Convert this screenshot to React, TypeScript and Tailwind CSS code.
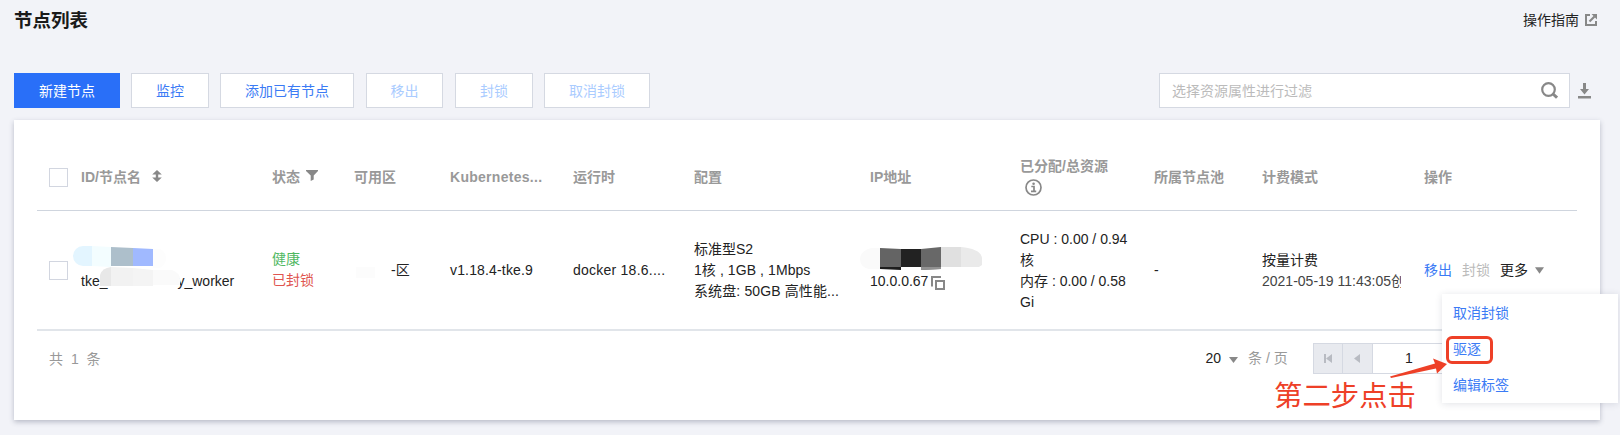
import type { ReactNode } from "react";

const columns =
  "grid grid-cols-[44px_191px_82px_96px_123px_121px_176px_150px_134px_108px_162px_153px] items-center";

function Button({ children, primary, disabled, width }: { children: ReactNode; primary?: boolean; disabled?: boolean; width: string }) {
  const tone = primary
    ? "border-[#296ff8] bg-[#296ff8] text-white"
    : disabled
      ? "border-[#d5d9e2] bg-white text-[#aaccff]"
      : "border-[#d5d9e2] bg-white text-[#3b7bf5]";
  return <button className={`h-[35px] border pt-px ${width} ${tone}`}>{children}</button>;
}

function Checkbox() {
  return <span className="ml-3 block h-[19px] w-[19px] border border-[#d2d6e0] bg-white" />;
}

function SortIcon() {
  return (
    <svg className="mb-[2px] ml-[11px] h-3 w-[10px]" viewBox="0 0 10 12" fill="#888">
      <path d="M5 0l4.800 4.500H6.200v3h3.600L5 12 .2 7.500h3.600v-3H.2z" />
    </svg>
  );
}

function FilterIcon() {
  return (
    <svg className="mb-[4px] ml-[6px] h-[11px] w-[12px]" viewBox="0 0 12 11" fill="#888">
      <path d="M0 0h12v1L7.700 5.500V9.500L4.700 11V5.500L0 1z" />
    </svg>
  );
}

function InfoIcon() {
  return (
    <svg className="ml-[5px] h-[17px] w-[17px]" viewBox="0 0 17 17" fill="none" stroke="#888">
      <circle cx="8.500" cy="8.500" r="7.500" strokeWidth="1.700" />
      <path d="M6.300 7.500h2.700v4.500M6 12.300h5.200" strokeWidth="1.700" />
      <circle cx="8.600" cy="4.700" r="1.300" fill="#888" stroke="none" />
    </svg>
  );
}

function CopyIcon() {
  return (
    <svg className="ml-[3px] mt-[3px] h-[14px] w-[14px]" viewBox="0 0 14 14" fill="none" stroke="#888" strokeWidth="2">
      <path d="M1 10.500V1h9" />
      <rect x="5" y="5" width="8" height="8" />
    </svg>
  );
}

function NameMask() {
  return (
    <svg className="absolute -left-2 -top-[2px] h-[41px] w-[108px]" viewBox="0 0 108 41">
      <path d="M10 0h9v20h-9a10 10 0 0 1 0-20" fill="#e3f5ff" />
      <path d="M19 0l19 1v20l-19-1z" fill="#f3fdff" />
      <path d="M38 1l22 1v18H38z" fill="#adbfcb" />
      <path d="M60 2l20 1v17H60z" fill="#a0b9ff" />
      <path d="M80 3h7q6 3 6 9t-6 10H80z" fill="#fdfdfd" />
      <path d="M38 21v19H27V29q2-7 11-8" fill="#e8e8e8" />
      <path d="M38 21l22 1v18H38z" fill="#f2f2f2" />
      <path d="M60 22l20 2v16H60z" fill="#f4f4f4" />
      <path d="M80 24h19q8 3 8 9v6H80z" fill="#fafafa" />
    </svg>
  );
}

function IpMask() {
  return (
    <svg className="absolute -left-[10px] -top-[2px] h-[24px] w-[123px]" viewBox="0 0 123 24">
      <path d="M11 1h10v21H9Q0 20 0 12T11 1" fill="#fafafa" />
      <path d="M20 1l21 1v18H20z" fill="#646464" />
      <path d="M20 20h21v3l-21-1z" fill="#1d1d1d" />
      <path d="M41 2h20v18H41z" fill="#222" />
      <path d="M61 2l20-2v22l-20 1z" fill="#686868" />
      <path d="M61 20h20v2l-20 1z" fill="#909090" />
      <path d="M81 0h20v20H81z" fill="#e0e0e0" />
      <path d="M101 0q20 2 21 11v7l-3 2h-18z" fill="#eaeaea" />
    </svg>
  );
}

export default function App() {
  return (
    <div className="relative h-[435px] w-[1620px] overflow-hidden bg-[#f2f3f8] px-[14px] font-['Liberation_Sans','Noto_Sans_CJK_SC',sans-serif] text-sm leading-[21px] text-[#222]">
      <header className="flex h-[40px] items-center justify-between pr-[9px]">
        <h1 className="text-[18.500px] font-bold text-[#1a1a1a]">节点列表</h1>
        <a className="flex items-center">
          操作指南
          <svg className="ml-[6px] h-3 w-3" viewBox="0 0 12 12" fill="none" stroke="#888" strokeWidth="2">
            <path d="M5 1H1v10h10V7" />
            <path d="M4.500 7.500l5-5" strokeWidth="2.200" />
            <path d="M6.500 0H12v5.500z" fill="#888" stroke="none" />
          </svg>
        </a>
      </header>

      <div className="flex h-20 items-start pt-[33px]">
        <div className="flex">
          <Button primary width="w-[106px]">新建节点</Button>
          <Button width="ml-[11px] w-[78px]">监控</Button>
          <Button width="ml-[11px] w-[134px]">添加已有节点</Button>
          <Button disabled width="ml-3 w-[77px]">移出</Button>
          <Button disabled width="ml-3 w-[78px]">封锁</Button>
          <Button disabled width="ml-[11px] w-[106px]">取消封锁</Button>
        </div>
        <div className="ml-auto flex h-[35px] w-[411px] items-center justify-between border border-[#d5d9e2] bg-white pl-3 pr-[11px] text-[#bbb]">
          <span className="pt-px">选择资源属性进行过滤</span>
          <svg className="h-[17px] w-[17px]" viewBox="0 0 17 17" fill="none" stroke="#888">
            <circle cx="7.500" cy="7.500" r="6.300" strokeWidth="2.200" />
            <path d="M11.500 11.500l4.500 4.200" strokeWidth="3" />
          </svg>
        </div>
        <svg className="ml-2 mr-[15px] mt-[10px] h-4 w-[13px]" viewBox="0 0 13 16" fill="#888">
          <path d="M5 0h3v6h3l-4.500 5.500L2 6h3zM0 13h13v2.500H0z" />
        </svg>
      </div>

      <main className="h-[300px] w-[1586px] bg-white pl-[23px] pt-6 shadow-[0_2px_5px_rgba(50,55,85,0.3)]">
        <div className={`${columns} h-[67px] w-[1540px] border-b border-[#cfd5de] font-bold text-[#999]`}>
          <Checkbox />
          <div className="flex items-center">ID/节点名<SortIcon /></div>
          <div className="flex items-center">状态<FilterIcon /></div>
          <div>可用区</div>
          <div className="tracking-[0.280px]">Kubernetes...</div>
          <div>运行时</div>
          <div>配置</div>
          <div>IP地址</div>
          <div>
            已分配/总资源
            <div className="flex h-[21px] items-center"><InfoIcon /></div>
          </div>
          <div>所属节点池</div>
          <div>计费模式</div>
          <div>操作</div>
        </div>

        <div className={`${columns} h-[120px] w-[1540px] border-b-2 border-[#e1e5ea]`}>
          <Checkbox />
          <div className="relative pt-[23px]">
            tke_<span className="ml-[70px]">y_worker</span>
            <NameMask />
          </div>
          <div>
            <div className="text-[#4fb862]">健康</div>
            <div className="text-[#e05550]">已封锁</div>
          </div>
          <div className="flex items-center pl-[2px]">
            <span className="mr-4 mt-[5px] h-[11px] w-[19px] bg-[#fcfcfc]" />-区
          </div>
          <div className="pt-px tracking-[0.160px]">v1.18.4-tke.9</div>
          <div className="pt-px tracking-[0.240px]">docker 18.6....</div>
          <div>
            <div>标准型S2</div>
            <div className="tracking-[0.080px]">1核 , 1GB , 1Mbps</div>
            <div className="whitespace-nowrap tracking-[0.120px]">系统盘: 50GB 高性能...</div>
          </div>
          <div className="relative pt-[22px]">
            <div className="flex h-[21px] items-center">10.0.0.67<CopyIcon /></div>
            <IpMask />
          </div>
          <div className="w-[110px] pt-px">
            <div>CPU : 0.00 / 0.94</div>
            <div>核</div>
            <div>内存 : 0.00 / 0.58</div>
            <div>Gi</div>
          </div>
          <div className="pt-px">-</div>
          <div className="w-[139px] overflow-hidden whitespace-nowrap pt-px">
            <div>按量计费</div>
            <div className="text-[#444]">2021-05-19 11:43:05创</div>
          </div>
          <div className="flex items-center gap-[10px]">
            <span className="text-[#3b7bf5]">移出</span>
            <span className="text-[#bbb]">封锁</span>
            <span className="flex items-center">
              更多
              <svg className="ml-[7px] h-[7px] w-[9px]" viewBox="0 0 10 7" fill="#888"><path d="M0 0h10L5 7z" /></svg>
            </span>
          </div>
        </div>

        <div className="flex h-[55px] items-center pl-3">
          <span className="pt-px text-[#999] [word-spacing:4px]">共 1 条</span>
          <div className="ml-auto flex items-center">
            20
            <svg className="ml-2 mt-[3px] h-[6px] w-[9px]" viewBox="0 0 9 6" fill="#888"><path d="M0 0h9L4.500 6z" /></svg>
            <span className="ml-[10px] w-[65px] text-[#999]">条 / 页</span>
          </div>
          <div className="mr-[134px] flex h-[31px] w-[153px] border border-[#d5d9e2] bg-white">
            <span className="flex w-[29px] items-center justify-center border-r border-[#d5d9e2] bg-[#e8eaef]">
              <svg className="h-[9px] w-2" viewBox="0 0 8 9" fill="#b8bbc2"><path d="M0 0h2v9H0zM8 0v9L2 4.500z" /></svg>
            </span>
            <span className="flex w-[30px] items-center justify-center border-r border-[#d5d9e2] bg-[#e8eaef]">
              <svg className="mr-px h-[9px] w-[6px]" viewBox="0 0 6 9" fill="#b8bbc2"><path d="M6 0v9L0 4.500z" /></svg>
            </span>
            <span className="flex w-[72px] items-center justify-center">1</span>
          </div>
        </div>
      </main>

      <div className="absolute left-[1442px] top-[294px] flex h-[109px] w-[176px] flex-col bg-white pl-[11px] pt-px text-[#3b7bf5] shadow-[0_1px_7px_rgba(50,55,85,0.14)]">
        <div className="flex h-9 items-center pt-px">取消封锁</div>
        <div className="flex h-[37px] items-center">驱逐</div>
        <div className="flex h-9 items-center">编辑标签</div>
      </div>

      <div className="absolute left-[1446px] top-[336px] h-[28px] w-[47px] rounded-md border-[3px] border-[#ee4027]" />
      <svg className="absolute left-[1388px] top-[356px] h-6 w-[60px]" viewBox="0 0 60 24" fill="#ee4027">
        <path d="M2 20.500L47 7.500 45 2.500 59 8 49 17.500l-1-5L3 22z" />
      </svg>
      <div className="absolute left-[1274px] top-[376px] text-[28.400px] leading-[40px] text-[#ee4027]">第二步点击</div>
    </div>
  );
}
